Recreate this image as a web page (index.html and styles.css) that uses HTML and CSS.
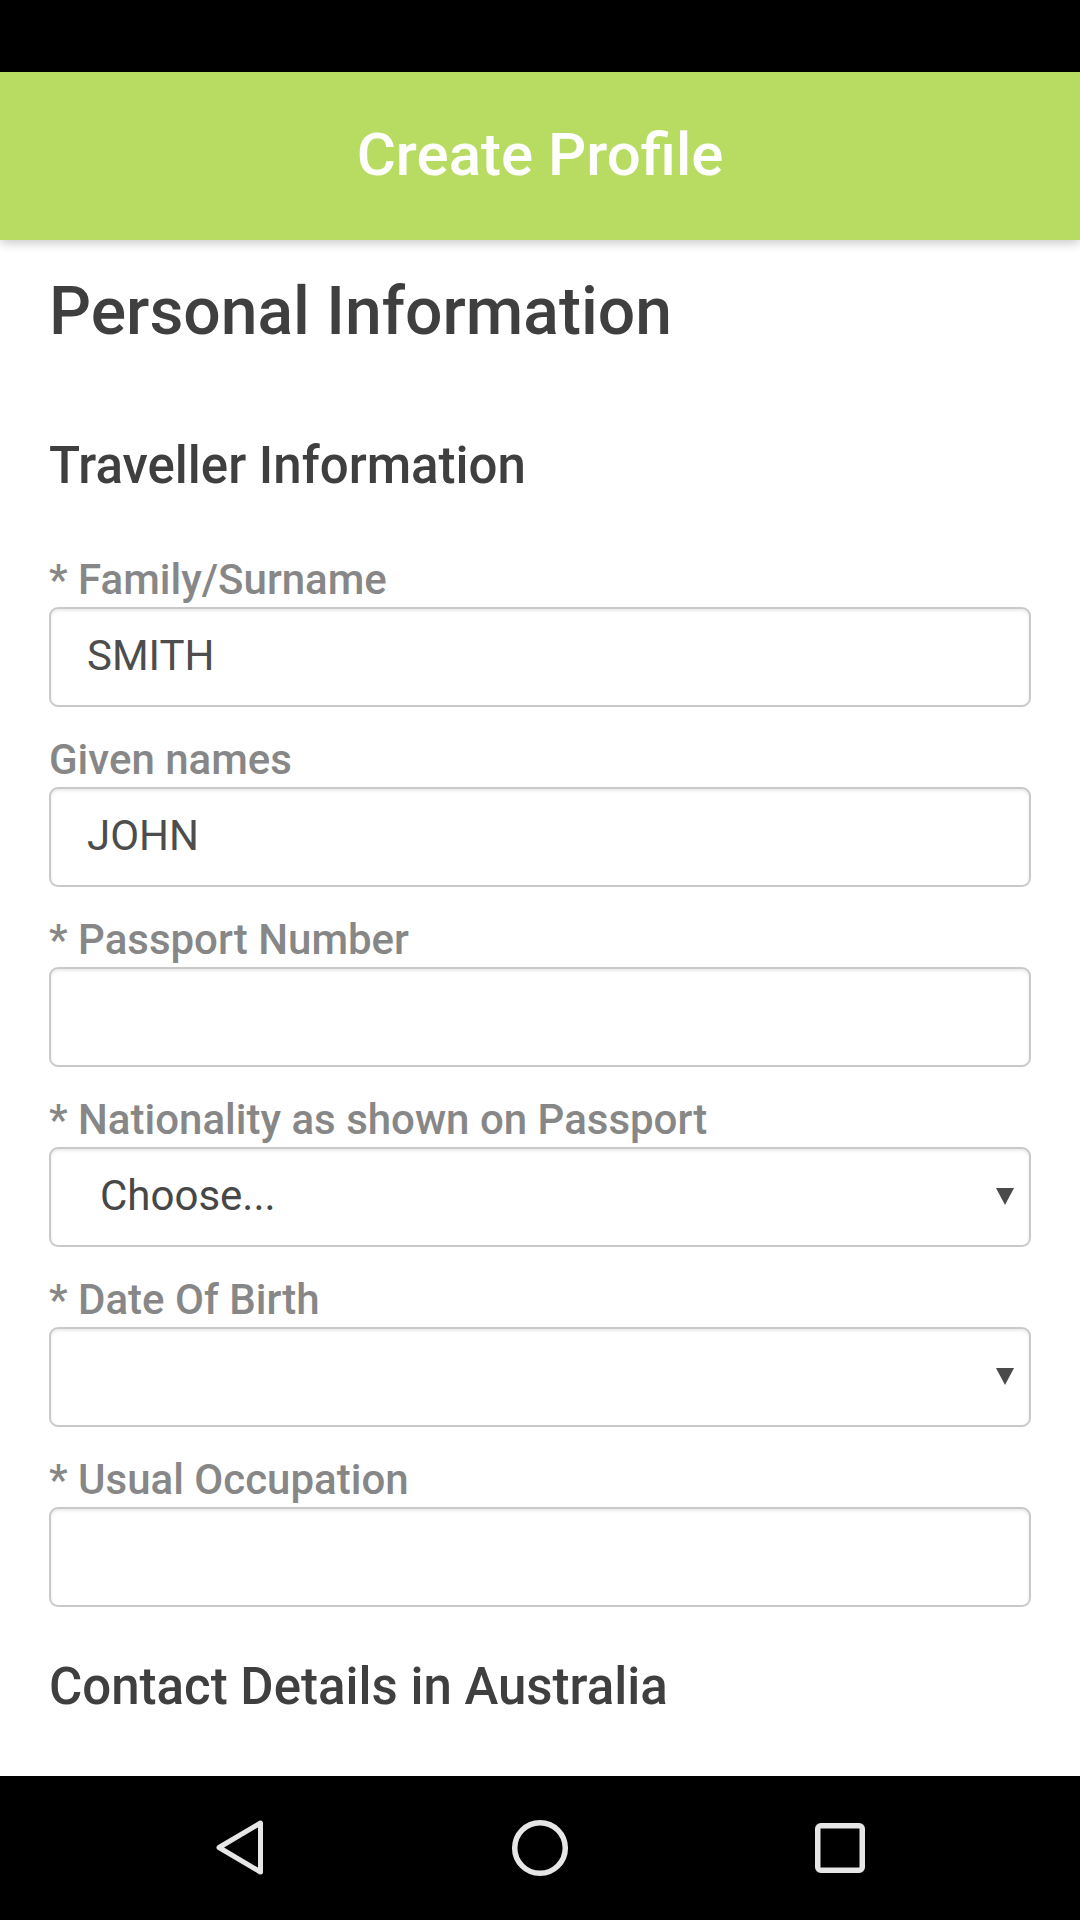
FILE: index.html
```html
<!DOCTYPE html>
<html lang="en">
<head>
<meta charset="utf-8">
<title>Create Profile</title>
<link rel="stylesheet" href="styles.css">
</head>
<body>
<div class="screen">
  <div class="status-bar"></div>
  <header class="app-bar">
    <h1 class="app-title">Create Profile</h1>
  </header>
  <main class="content">
    <h2 class="page-title">Personal Information</h2>
    <h3 class="section-title">Traveller Information</h3>

    <div class="field">
      <label class="field-label">* Family/Surname</label>
      <input class="text-input" type="text" value="SMITH">
    </div>
    <div class="field">
      <label class="field-label">Given names</label>
      <input class="text-input" type="text" value="JOHN">
    </div>
    <div class="field">
      <label class="field-label">* Passport Number</label>
      <input class="text-input" type="text" value="">
    </div>
    <div class="field">
      <label class="field-label">* Nationality as shown on Passport</label>
      <div class="select-wrap">
        <select class="select-input"><option>Choose...</option></select>
        <svg class="select-arrow" width="18" height="17" viewBox="0 0 18 17"><polygon points="0,0 18,0 9,17" fill="#4a4a4a"/></svg>
      </div>
    </div>
    <div class="field">
      <label class="field-label">* Date Of Birth</label>
      <div class="select-wrap">
        <select class="select-input"><option></option></select>
        <svg class="select-arrow" width="18" height="17" viewBox="0 0 18 17"><polygon points="0,0 18,0 9,17" fill="#4a4a4a"/></svg>
      </div>
    </div>
    <div class="field">
      <label class="field-label">* Usual Occupation</label>
      <input class="text-input" type="text" value="">
    </div>

    <h3 class="section-title contact-title">Contact Details in Australia</h3>
  </main>
  <nav class="nav-bar">
    <svg class="nav-icon" width="60" height="60" viewBox="0 0 60 60"><polygon points="9,29.5 50.5,5 50.5,54" fill="none" stroke="#e6e6e6" stroke-width="5" stroke-linejoin="round"/></svg>
    <svg class="nav-icon" width="60" height="60" viewBox="0 0 60 60"><circle cx="30" cy="30" r="25.3" fill="none" stroke="#e6e6e6" stroke-width="5.5"/></svg>
    <svg class="nav-icon" width="60" height="60" viewBox="0 0 60 60"><rect x="7.75" y="7.75" width="44.5" height="44.5" rx="3" fill="none" stroke="#e6e6e6" stroke-width="5.5"/></svg>
  </nav>
</div>
</body>
</html>
```

FILE: styles.css
```css
* {
  box-sizing: border-box;
}

html, body {
  margin: 0;
  padding: 0;
  background: #ffffff;
}

body {
  font-family: Roboto, "Liberation Sans", sans-serif;
}

.screen {
  width: 1080px;
  height: 1920px;
  display: flex;
  flex-direction: column;
  overflow: hidden;
}

.status-bar {
  height: 72px;
  flex: 0 0 72px;
  background: #000000;
}

.app-bar {
  flex: 0 0 168px;
  height: 168px;
  background: #b8db61;
  display: flex;
  align-items: center;
  justify-content: center;
  box-shadow: 0 3px 10px rgba(0, 0, 0, 0.22);
  position: relative;
  z-index: 2;
}

.app-title {
  margin: 0;
  color: #ffffff;
  font-size: 60px;
  font-weight: 500;
  line-height: 70px;
  padding-bottom: 2px;
}

.content {
  flex: 1 1 auto;
  padding: 32px 49px 0 49px;
  display: flex;
  flex-direction: column;
  overflow: hidden;
}

.page-title {
  margin: 0;
  font-size: 66px;
  line-height: 80px;
  font-weight: 500;
  color: #3f3f3f;
}

.section-title {
  margin: 84px 0 0 0;
  font-size: 51px;
  line-height: 60px;
  font-weight: 500;
  color: #3f3f3f;
}

.section-title + .field {
  margin-top: 61px;
}

.field {
  display: flex;
  flex-direction: column;
  margin-bottom: 30px;
}

.field-label {
  font-size: 42px;
  line-height: 46px;
  font-weight: 500;
  color: #878787;
  margin-bottom: 4px;
}

.text-input,
.select-input {
  width: 100%;
  height: 100px;
  border: 2px solid #c9c9c9;
  border-radius: 9px;
  box-shadow: inset 0 2px 3px rgba(0, 0, 0, 0.09);
  background: #ffffff;
  font-family: Roboto, "Liberation Sans", sans-serif;
  font-size: 42px;
  color: #4d4d4d;
  outline: none;
  margin: 0;
}

.text-input {
  padding: 0 36px 4px 36px;
}

.select-wrap {
  position: relative;
}

.select-input {
  display: block;
  -webkit-appearance: none;
  appearance: none;
  padding: 0 60px 4px 49px;
  color: #474747;
}

.select-arrow {
  position: absolute;
  right: 17px;
  top: 41px;
}

.contact-title {
  margin-top: 20px;
}

.nav-bar {
  flex: 0 0 144px;
  height: 144px;
  background: #000000;
  display: flex;
  align-items: center;
  justify-content: center;
  gap: 240px;
}

.nav-icon {
  display: block;
}
```
